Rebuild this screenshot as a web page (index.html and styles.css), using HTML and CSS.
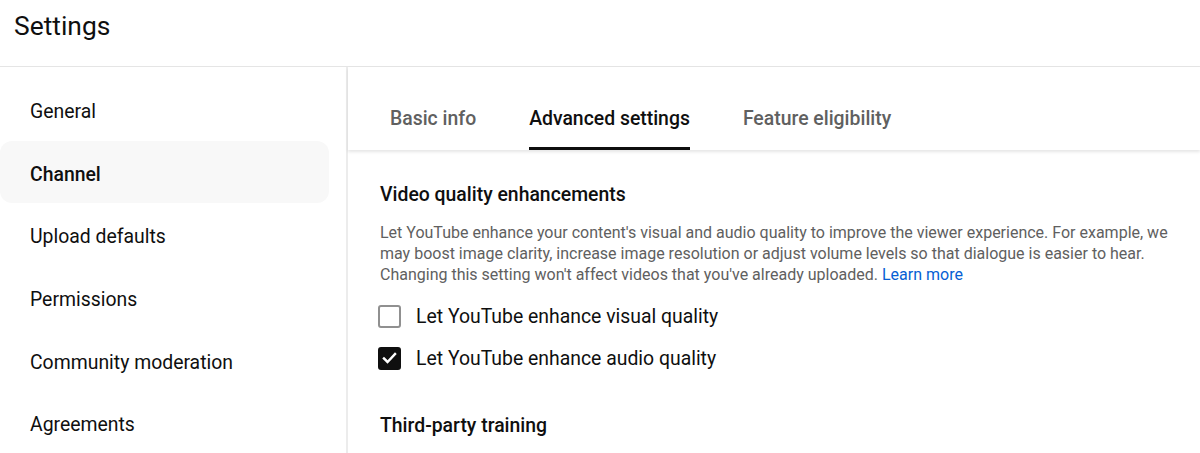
FILE: index.html
```html
<!DOCTYPE html>
<html>
<head>
<meta charset="utf-8">
<link rel="stylesheet" href="styles.css">
</head>
<body>
<header class="top">
  <h1 class="title">Settings</h1>
</header>
<div class="layout">
  <nav class="side">
    <div class="side-item">General</div>
    <div class="side-item active">Channel</div>
    <div class="side-item">Upload defaults</div>
    <div class="side-item">Permissions</div>
    <div class="side-item">Community moderation</div>
    <div class="side-item">Agreements</div>
  </nav>
  <main class="main">
    <div class="tabs">
      <div class="tab">Basic info</div>
      <div class="tab selected">Advanced settings</div>
      <div class="tab">Feature eligibility</div>
    </div>
    <section class="content">
      <h2 class="sec-title">Video quality enhancements</h2>
      <p class="desc">Let YouTube enhance your content's visual and audio quality to improve the viewer experience. For example, we may boost image clarity, increase image resolution or adjust volume levels so that dialogue is easier to hear. Changing this setting won't affect videos that you've already uploaded. <span class="link">Learn more</span></p>
      <div class="checks">
        <label class="check-row">
          <span class="box"></span>
          <span class="check-label">Let YouTube enhance visual quality</span>
        </label>
        <label class="check-row">
          <span class="box on"><svg viewBox="0 0 24 24" width="22" height="22"><path d="M5 12.5l4.5 4.5L19 7" fill="none" stroke="#fff" stroke-width="3" stroke-linecap="square"/></svg></span>
          <span class="check-label">Let YouTube enhance audio quality</span>
        </label>
      </div>
      <h2 class="sec-title second">Third-party training</h2>
    </section>
  </main>
</div>
</body>
</html>
```

FILE: styles.css
```css
* { box-sizing: border-box; }
html, body { margin: 0; padding: 0; background: #fff; }
body {
  font-family: Roboto, "Noto Sans", Arial, sans-serif;
  color: #0f0f0f;
  width: 1200px;
  height: 453px;
  overflow: hidden;
}
.top {
  height: 67px;
  border-bottom: 1px solid #e5e5e5;
  padding: 8px 14px 0;
}
.title {
  margin: 0;
  font-size: 26.4px;
  font-weight: 400;
  line-height: 36px;
}
.layout {
  display: flex;
  height: 386px;
}
.side {
  width: 348px;
  flex: none;
  border-right: 2px solid #ececec;
  padding: 11px 17px 0 0;
}
.side-item {
  height: 62.6px;
  display: flex;
  align-items: center;
  padding-left: 30px;
  padding-top: 5px;
  font-size: 19.4px;
  border-radius: 12px;
  color: #0f0f0f;
}
.side-item.active {
  background: #f8f8f8;
  font-weight: 500;
}
.main {
  flex: 1;
  min-width: 0;
}
.tabs {
  display: flex;
  padding: 19px 0 0 42px;
  gap: 53px;
  height: 83px;
  box-shadow: 0 2px 3px rgba(0,0,0,0.1);
  position: relative;
}
.tab {
  height: 64px;
  display: flex;
  align-items: center;
  font-size: 19.4px;
  font-weight: 500;
  color: #606060;
  border-bottom: 3px solid transparent;
  padding-top: 3px;
}
.tab.selected {
  color: #0f0f0f;
  border-bottom-color: #0f0f0f;
}
.content {
  padding: 33px 24px 0 32px;
}
.sec-title {
  margin: 0;
  font-size: 19.4px;
  font-weight: 500;
  line-height: 24px;
}
.sec-title.second {
  margin-top: 35px;
}
.desc {
  margin: 15px 0 0;
  font-size: 16px;
  line-height: 21px;
  color: #606060;
}
.link { color: #065fd4; }
.checks {
  margin-top: 10px;
  display: flex;
  flex-direction: column;
}
.check-row {
  height: 42px;
  display: flex;
  align-items: center;
}
.box {
  width: 23px;
  height: 23px;
  border: 2px solid #909090;
  border-radius: 3px;
  margin-left: -2px;
  margin-right: 15px;
  display: flex;
  align-items: center;
  justify-content: center;
}
.box.on {
  background: #0f0f0f;
  border-color: #0f0f0f;
}
.check-label {
  font-size: 19.4px;
  color: #0f0f0f;
}
```
